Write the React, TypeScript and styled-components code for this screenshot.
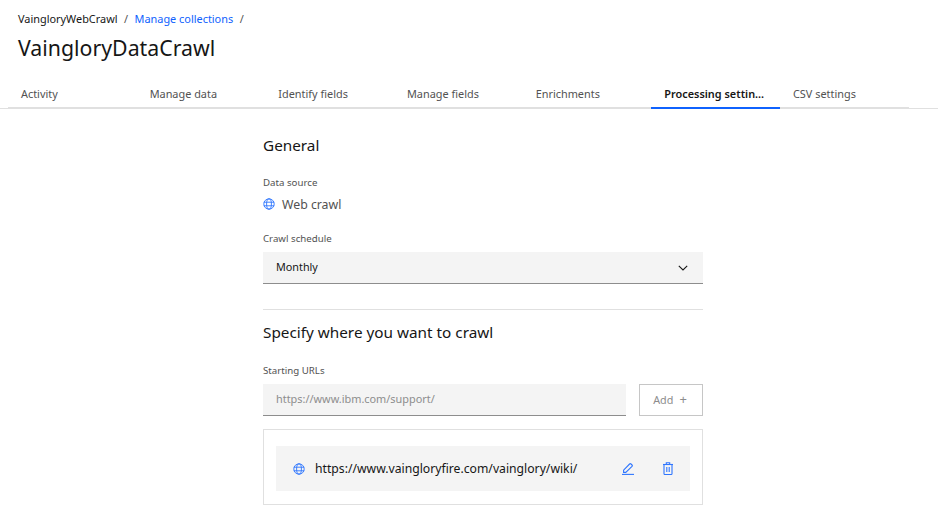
import React from 'react';
import styled, { createGlobalStyle } from 'styled-components';

const GlobalStyle = createGlobalStyle`
  html, body {
    margin: 0;
    padding: 0;
    background: #fff;
    overflow: hidden;
  }
  body {
    font-family: 'Noto Sans', 'Liberation Sans', sans-serif;
    color: #161616;
  }
`;

const TABS = [
  'Activity',
  'Manage data',
  'Identify fields',
  'Manage fields',
  'Enrichments',
  'Processing settin...',
  'CSV settings',
];

const GlobeIcon = () => (
  <svg width="12" height="12" viewBox="0 0 12 12" fill="none" stroke="#2f76fe" strokeWidth="0.9">
    <circle cx="6" cy="6" r="5.2" />
    <ellipse cx="6" cy="6" rx="2.4" ry="5.2" />
    <path d="M0.8 4.2h10.4M0.8 7.8h10.4" />
  </svg>
);

const ChevronIcon = () => (
  <svg width="10" height="6" viewBox="0 0 10 6" fill="none" stroke="#161616" strokeWidth="1.1">
    <path d="M0.8 0.8 5 5l4.2-4.2" />
  </svg>
);

const PencilIcon = () => (
  <svg width="12" height="12" viewBox="0 0 12 12" fill="none" stroke="#2f76fe" strokeWidth="1.1">
    <path d="M0 11.4h12" />
    <path d="M1.6 9.4V7.2L7.6 1a1 1 0 0 1 1.4 0l1 1a1 1 0 0 1 0 1.4L3.8 9.4z" />
  </svg>
);

const TrashIcon = () => (
  <svg width="10" height="13" viewBox="0 0 10 13" fill="none" stroke="#2f76fe" strokeWidth="1.1">
    <path d="M0 2.5h10" />
    <path d="M3.3 2.5V0.8h3.4v1.7" />
    <path d="M1 2.5v9.2a.8.8 0 0 0 .8.8h6.4a.8.8 0 0 0 .8-.8V2.5" />
    <path d="M3.8 5v5M6.2 5v5" />
  </svg>
);

const Header = styled.header`
  padding: 11px 18px 0;
`;

const Breadcrumbs = styled.nav`
  display: flex;
  align-items: center;
  height: 16px;
  font-size: 10.9px;
  line-height: 16px;
`;

const Crumb = styled.span<{ $link?: boolean }>`
  color: ${(props) => (props.$link ? '#0f62fe' : '#161616')};
`;

const Slash = styled.span`
  margin: 0 6.5px;
  color: #525252;
`;

const Title = styled.h1`
  margin: 5px 0 0;
  font-size: 21.3px;
  font-weight: 400;
  line-height: 32px;
`;

const TabBar = styled.div`
  display: flex;
  margin-top: 17px;
  padding-left: 8px;
  border-bottom: 1px solid #e0e0e0;
`;

const Tab = styled.div<{ $active?: boolean }>`
  box-sizing: border-box;
  width: 128.67px;
  height: 28px;
  padding: 5px 0 0 13px;
  margin-bottom: -1px;
  font-size: 10.9px;
  line-height: 16px;
  white-space: nowrap;
  font-weight: ${(props) => (props.$active ? 600 : 400)};
  color: ${(props) => (props.$active ? '#161616' : '#525252')};
  border-bottom: 2px solid ${(props) => (props.$active ? '#0f62fe' : '#e0e0e0')};
`;

const Content = styled.main`
  box-sizing: border-box;
  width: 440px;
  margin-left: 263px;
  padding-top: 25px;
`;

const SectionTitle = styled.h2`
  margin: 0;
  font-size: 15.3px;
  font-weight: 400;
  line-height: 22px;
`;

const Label = styled.div<{ $top: number }>`
  margin-top: ${(props) => props.$top}px;
  font-size: 9.7px;
  line-height: 16px;
  color: #525252;
`;

const SourceRow = styled.div`
  display: flex;
  align-items: center;
  gap: 7px;
  margin-top: 3px;
  height: 20px;
  font-size: 12.3px;
  color: #525252;
`;

const Select = styled.div`
  box-sizing: border-box;
  display: flex;
  align-items: center;
  justify-content: space-between;
  height: 32px;
  margin-top: 5px;
  padding: 0 15px 0 13px;
  background: #f4f4f4;
  border-bottom: 1px solid #8d8d8d;
  font-size: 10.8px;
  color: #161616;
`;

const SelectValue = styled.span`
  margin-bottom: 2px;
`;

const Divider = styled.hr`
  margin: 25px 0 0;
  border: 0;
  border-top: 1px solid #e0e0e0;
`;

const CrawlHeading = styled(SectionTitle)`
  margin-top: 11px;
`;

const InputRow = styled.div`
  display: flex;
  gap: 13px;
  margin-top: 5px;
`;

const UrlInput = styled.div`
  box-sizing: border-box;
  flex: 1;
  height: 32px;
  padding: 0 13px;
  background: #f4f4f4;
  border-bottom: 1px solid #8d8d8d;
  font-size: 10.9px;
  line-height: 30px;
  color: #8d8d8d;
`;

const AddButton = styled.div`
  box-sizing: border-box;
  display: flex;
  align-items: center;
  justify-content: center;
  gap: 6px;
  width: 64px;
  height: 32px;
  padding: 0 2px 2px 0;
  border: 1px solid #c6c6c6;
  font-size: 10.8px;
  color: #8d8d8d;
`;

const PlusSign = styled.span`
  font-size: 13px;
  line-height: 14px;
`;

const UrlBox = styled.section`
  box-sizing: border-box;
  height: 76px;
  margin-top: 13px;
  padding: 16px 12px 0;
  border: 1px solid #e0e0e0;
`;

const UrlRow = styled.div`
  display: flex;
  align-items: center;
  height: 45px;
  padding-left: 17px;
  background: #f4f4f4;
  font-size: 12.2px;
`;

const UrlText = styled.span`
  flex: 1;
  margin-left: 10px;
  white-space: nowrap;
`;

const IconSlot = styled.span<{ $width: number }>`
  display: flex;
  width: ${(props) => props.$width}px;
`;

export default function App() {
  return (
    <>
      <GlobalStyle />
      <Header>
        <Breadcrumbs>
          <Crumb>VaingloryWebCrawl</Crumb>
          <Slash>/</Slash>
          <Crumb $link>Manage collections</Crumb>
          <Slash>/</Slash>
        </Breadcrumbs>
        <Title>VaingloryDataCrawl</Title>
      </Header>
      <TabBar>
        {TABS.map((tab) => (
          <Tab key={tab} $active={tab.startsWith('Processing')}>
            {tab}
          </Tab>
        ))}
      </TabBar>
      <Content>
        <SectionTitle>General</SectionTitle>
        <Label $top={19}>Data source</Label>
        <SourceRow>
          <GlobeIcon />
          Web crawl
        </SourceRow>
        <Label $top={17}>Crawl schedule</Label>
        <Select>
          <SelectValue>Monthly</SelectValue>
          <ChevronIcon />
        </Select>
        <Divider />
        <CrawlHeading>Specify where you want to crawl</CrawlHeading>
        <Label $top={20}>Starting URLs</Label>
        <InputRow>
          <UrlInput>https://www.ibm.com/support/</UrlInput>
          <AddButton>
            Add <PlusSign>+</PlusSign>
          </AddButton>
        </InputRow>
        <UrlBox>
          <UrlRow>
            <GlobeIcon />
            <UrlText>https://www.vaingloryfire.com/vainglory/wiki/</UrlText>
            <IconSlot $width={41}>
              <PencilIcon />
            </IconSlot>
            <IconSlot $width={27}>
              <TrashIcon />
            </IconSlot>
          </UrlRow>
        </UrlBox>
      </Content>
    </>
  );
}
